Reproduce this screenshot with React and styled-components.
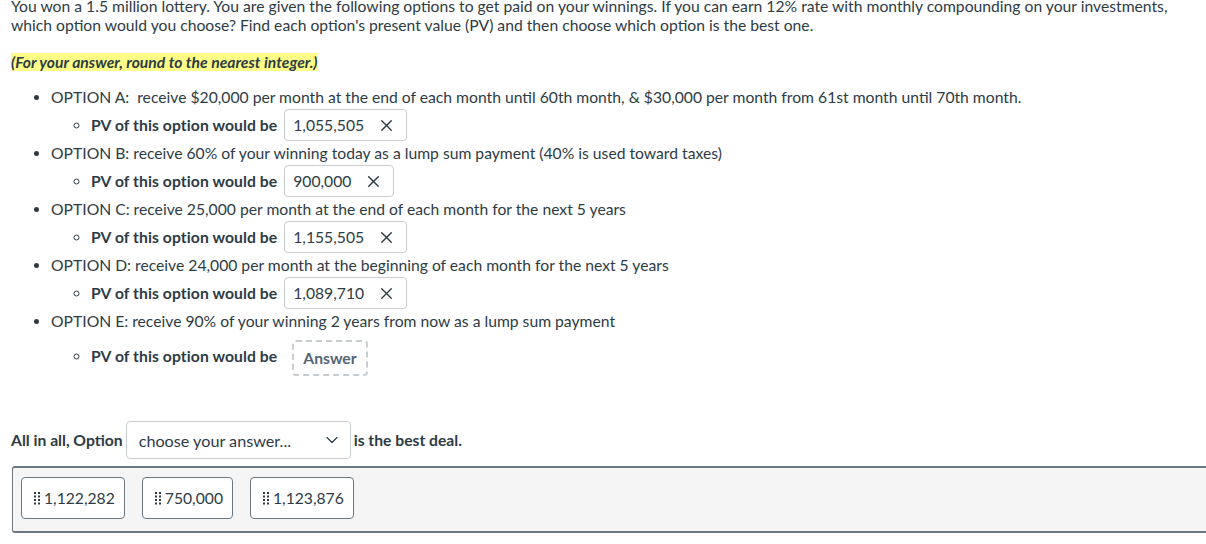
import React from "react";
import styled, { createGlobalStyle } from "styled-components";
import { ChevronDown, X } from "lucide-react";

const GlobalStyle = createGlobalStyle`
  html, body {
    margin: 0;
    padding: 0;
    background: #fff;
    overflow: hidden;
  }
  body {
    font-family: Lato, "Noto Sans", sans-serif;
    font-size: 15.7px;
    color: #2d3b45;
  }
`;

const Page = styled.div`
  box-sizing: border-box;
  width: 1206px;
  padding-left: 11px;
`;

const Para = styled.p`
  margin: ${(p) => p.$top || 0}px 0 0;
  line-height: 19px;
`;

const Highlight = styled.span`
  background: #ffff88;
  font-weight: 700;
  font-style: italic;
`;

const List = styled.ul`
  margin: 13px 0 0;
  padding-left: 40px;
  list-style: disc;
`;

const OptionItem = styled.li`
  line-height: 24px;
`;

const SubList = styled.ul`
  margin: 0;
  padding-left: 40px;
  list-style: circle;
`;

const SubItem = styled.li`
  line-height: 32px;
  padding-top: ${(p) => p.$top || 0}px;
`;

const Label = styled.span`
  font-weight: 700;
  letter-spacing: 0.08px;
`;

const Filled = styled.span`
  display: inline-flex;
  align-items: center;
  box-sizing: border-box;
  height: 32px;
  margin-left: 7px;
  padding: 0 10px 0 8px;
  gap: 13px;
  border: 1px solid #c7cdd1;
  border-radius: 4px;
  vertical-align: top;
  line-height: 30px;
  svg {
    color: #2d3b45;
  }
`;

const Empty = styled.span`
  display: inline-flex;
  align-items: center;
  box-sizing: border-box;
  height: 36px;
  margin-left: 15px;
  padding: 0 9px;
  border: 2px dashed #c7cdd1;
  border-radius: 4px;
  color: #556572;
  font-weight: 700;
  vertical-align: middle;
`;

const SentenceRow = styled.div`
  display: flex;
  align-items: center;
  margin-top: 45px;
  font-weight: 700;
`;

const Select = styled.div`
  display: flex;
  align-items: center;
  justify-content: space-between;
  box-sizing: border-box;
  width: 225px;
  height: 38px;
  margin: 0 3px 0 3px;
  padding: 0 8px 0 12px;
  border: 1px solid #c7cdd1;
  border-radius: 4px;
  font-weight: 400;
  font-size: 16.2px;
`;

const DropArea = styled.div`
  display: flex;
  gap: 17px;
  margin: 7px -20px 0 1px;
  padding: 9px 8px 12px;
  background: #f5f5f5;
  border-top: 2px solid #6b7780;
  border-bottom: 2px solid #6b7780;
  border-left: 1px solid #6b7780;
  border-radius: 3px 0 0 3px;
`;

const Chip = styled.div`
  display: flex;
  align-items: center;
  gap: 3px;
  box-sizing: border-box;
  height: 42px;
  padding: 0 9px 0 12px;
  background: #fff;
  border: 1px solid #6b7780;
  border-radius: 4px;
`;

const Handle = () => (
  <svg width="7" height="13" viewBox="0 0 7 13">
    {[0, 1, 2, 3].map((r) =>
      [0, 1].map((c) => (
        <rect key={`${r}-${c}`} x={c * 4} y={r * 3.5} width="2" height="2" fill="#2d3b45" />
      ))
    )}
  </svg>
);

const options = [
  {
    text: "OPTION A:\u00a0 receive $20,000 per month at the end of each month until 60th month, & $30,000 per month from 61st month until 70th month.",
    value: "1,055,505",
  },
  {
    text: "OPTION B: receive 60% of your winning today as a lump sum payment (40% is used toward taxes)",
    value: "900,000",
  },
  {
    text: "OPTION C: receive 25,000 per month at the end of each month for the next 5 years",
    value: "1,155,505",
  },
  {
    text: "OPTION D: receive 24,000 per month at the beginning of each month for the next 5 years",
    value: "1,089,710",
  },
  {
    text: "OPTION E: receive 90% of your winning 2 years from now as a lump sum payment",
    value: null,
  },
];

const chips = ["1,122,282", "750,000", "1,123,876"];

export default function App() {
  return (
    <Page>
      <GlobalStyle />
      <Para $top={-3}>
        You won a 1.5 million lottery. You are given the following options to get paid on your winnings. If you can earn
        12% rate with monthly compounding on your investments, which option would you choose? Find each option's present
        value (PV) and then choose which option is the best one.
      </Para>
      <Para $top={18}>
        <Highlight>(For your answer, round to the nearest integer.)</Highlight>
      </Para>
      <List>
        {options.map((o) => (
          <OptionItem key={o.text}>
            {o.text}
            <SubList>
              <SubItem $top={o.value ? 0 : 7}>
                <Label>PV of this option would be</Label>
                {o.value ? (
                  <Filled>
                    {o.value}
                    <X size={19} strokeWidth={1.7} />
                  </Filled>
                ) : (
                  <Empty>Answer</Empty>
                )}
              </SubItem>
            </SubList>
          </OptionItem>
        ))}
      </List>
      <SentenceRow>
        All in all, Option
        <Select>
          choose your answer...
          <ChevronDown size={20} strokeWidth={1.4} />
        </Select>
        is the best deal.
      </SentenceRow>
      <DropArea>
        {chips.map((c) => (
          <Chip key={c}>
            <Handle />
            {c}
          </Chip>
        ))}
      </DropArea>
    </Page>
  );
}
